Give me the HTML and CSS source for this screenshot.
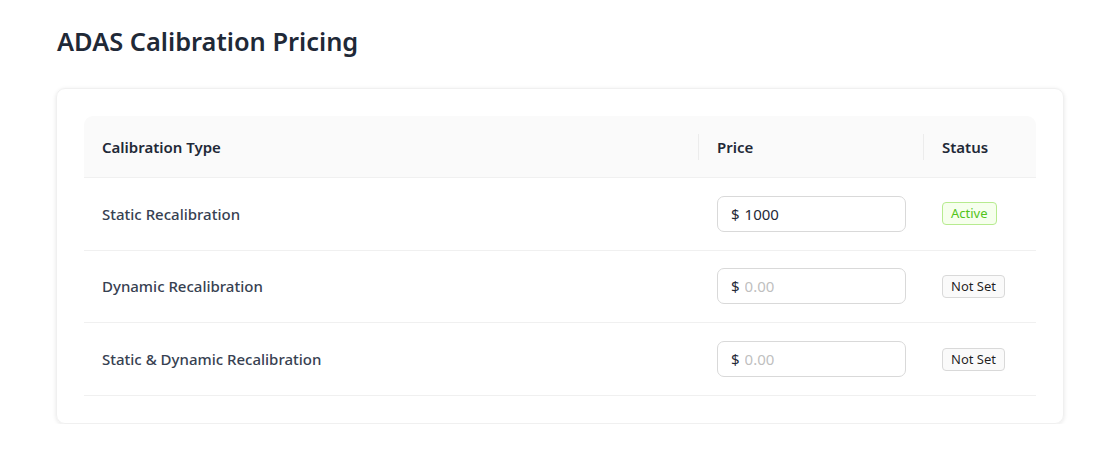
FILE: index.html
```html
<!DOCTYPE html>
<html lang="en">
  <head>
    <meta charset="UTF-8" />
    <meta name="viewport" content="width=device-width, initial-scale=1.0" />
    <title>ADAS Calibration Pricing</title>
    <link rel="stylesheet" href="styles.css">
  </head>
  <body>
    <div class="page">
      <h1 class="page-title">ADAS Calibration Pricing</h1>

      <div class="card">
        <table class="pricing-table">
          <thead>
            <tr>
              <th class="col-type">Calibration Type</th>
              <th class="col-price">Price</th>
              <th class="col-status">Status</th>
            </tr>
          </thead>
          <tbody>
            <tr>
              <td class="type-name">Static Recalibration</td>
              <td>
                <label class="price-input">
                  <span class="prefix">$</span>
                  <input type="text" value="1000" placeholder="0.00">
                </label>
              </td>
              <td><span class="tag tag-active">Active</span></td>
            </tr>
            <tr>
              <td class="type-name">Dynamic Recalibration</td>
              <td>
                <label class="price-input">
                  <span class="prefix">$</span>
                  <input type="text" placeholder="0.00">
                </label>
              </td>
              <td><span class="tag">Not Set</span></td>
            </tr>
            <tr>
              <td class="type-name">Static &amp; Dynamic Recalibration</td>
              <td>
                <label class="price-input">
                  <span class="prefix">$</span>
                  <input type="text" placeholder="0.00">
                </label>
              </td>
              <td><span class="tag">Not Set</span></td>
            </tr>
          </tbody>
        </table>
      </div>
    </div>
  </body>
</html>
```

FILE: styles.css
```css
* {
  margin: 0;
  padding: 0;
  box-sizing: border-box;
}

:root {
  --text-dark: #1f2937;
  --text-row: #374151;
  --border-light: #f0f0f0;
  --border-input: #d9d9d9;
}

body {
  background-color: #ffffff;
  font-family: "Noto Sans", "Open Sans", sans-serif;
  color: var(--text-dark);
}

.page {
  width: 1008px;
  margin-left: 56px;
  padding-top: 21px;
}

.page-title {
  padding-left: 1px;
  font-size: 25.4px;
  font-weight: 600;
  line-height: 41px;
  color: var(--text-dark);
}

.card {
  margin-top: 26px;
  padding: 27px;
  border: 1px solid var(--border-light);
  border-radius: 9px;
  box-shadow: 0 1px 4px rgba(0, 0, 0, 0.1);
}

.pricing-table {
  width: 100%;
  border-collapse: separate;
  border-spacing: 0;
  table-layout: fixed;
}

.pricing-table th {
  position: relative;
  height: 62px;
  padding: 0 18px 0 19px;
  background-color: #fafafa;
  border-bottom: 1px solid var(--border-light);
  text-align: left;
  font-size: 15px;
  font-weight: 600;
  color: var(--text-dark);
}

.pricing-table th.col-type {
  padding-left: 18px;
}

.pricing-table th + th::before {
  content: "";
  position: absolute;
  left: 0;
  top: 50%;
  width: 1px;
  height: 26px;
  transform: translateY(-50%);
  background-color: #ececec;
}

.col-type {
  width: 614px;
  border-top-left-radius: 9px;
}

.col-price {
  width: 225px;
}

.col-status {
  border-top-right-radius: 9px;
}

.pricing-table td {
  height: 72.67px;
  padding: 0 18px 0 19px;
  border-bottom: 1px solid var(--border-light);
  font-size: 15px;
}

.pricing-table td.type-name {
  padding-left: 18px;
  font-weight: 500;
  color: var(--text-row);
}

.price-input {
  display: flex;
  align-items: center;
  width: 189px;
  height: 36px;
  padding: 0 13px;
  border: 1px solid var(--border-input);
  border-radius: 7px;
  background-color: #ffffff;
}

.prefix {
  margin-right: 5px;
  font-size: 15px;
  color: var(--text-dark);
}

.price-input input {
  width: 100%;
  border: none;
  outline: none;
  background: transparent;
  font-family: inherit;
  font-size: 15px;
  color: var(--text-dark);
}

.price-input input::placeholder {
  color: #bfbfbf;
}

.tag {
  display: inline-block;
  padding: 0 8px;
  height: 23px;
  line-height: 21px;
  border: 1px solid var(--border-input);
  border-radius: 4px;
  background-color: #fafafa;
  font-size: 13px;
  color: rgba(0, 0, 0, 0.88);
}

.tag-active {
  border-color: #b7eb8f;
  background-color: #f6ffed;
  color: #52c41a;
}
```
